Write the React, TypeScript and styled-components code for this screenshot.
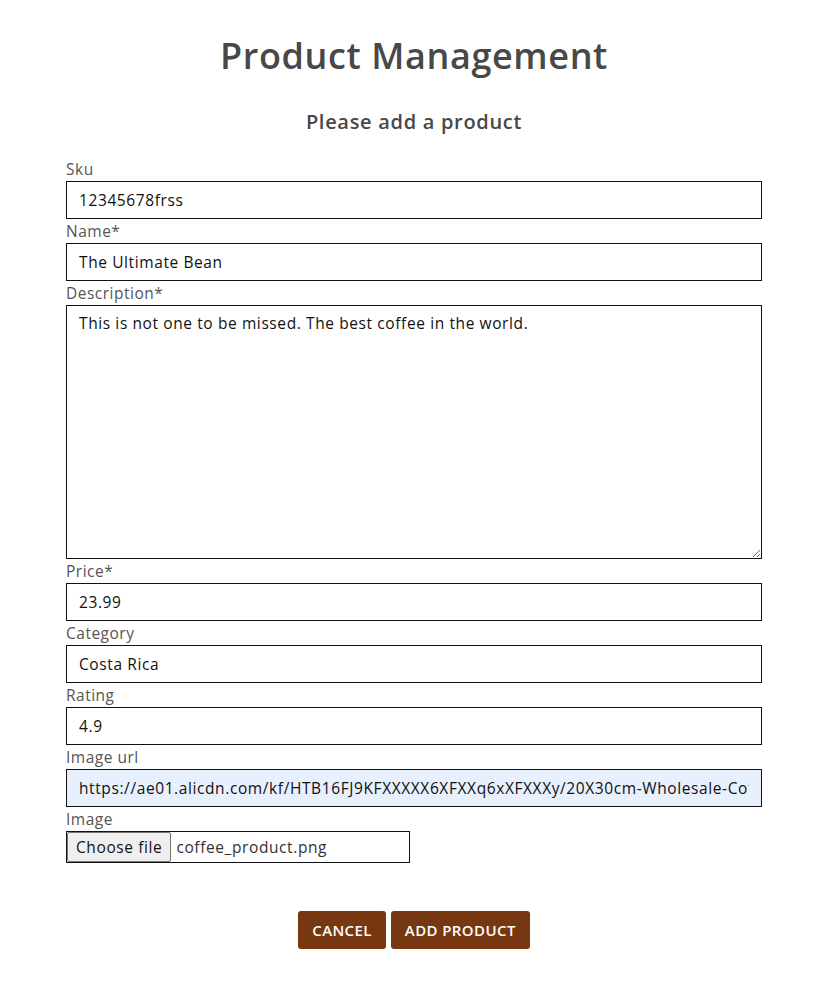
import React from "react";
import styled, { createGlobalStyle } from "styled-components";

const Global = createGlobalStyle`
  html, body { margin: 0; padding: 0; background: #fff; }
  body { font-family: "Open Sans", "Noto Sans", sans-serif; color: #444; }
  * { box-sizing: border-box; }
`;

const Page = styled.main`
  width: 100%;
  padding: 32px 65px 40px 66px;
  display: flex;
  flex-direction: column;
`;

const Title = styled.h1`
  margin: 0;
  text-align: center;
  font-size: 36px;
  letter-spacing: 0.6px;
  line-height: 48px;
  font-weight: 600;
  color: #484848;
`;

const Subtitle = styled.h2`
  margin: 27px 0 20px;
  text-align: center;
  font-size: 20px;
  letter-spacing: 0.7px;
  line-height: 30px;
  font-weight: 600;
  color: #484848;
`;

const Form = styled.form`
  display: flex;
  flex-direction: column;
`;

const Label = styled.label`
  display: block;
  font-size: 15.5px;
  letter-spacing: 0.5px;
  line-height: 24px;
  color: #555;
`;

const fieldText = `
  font-family: inherit;
  font-size: 15.5px;
  letter-spacing: 0.6px;
  color: #111;
  border: 1px solid #111;
  border-radius: 0;
  outline: none;
`;

const Input = styled.input<{ $autofill?: boolean }>`
  ${fieldText}
  display: block;
  width: 100%;
  height: 38px;
  padding: 0 12px;
  background: ${(p) => (p.$autofill ? "#e8f0fe" : "#fff")};
`;

const TextArea = styled.textarea`
  ${fieldText}
  display: block;
  width: 100%;
  height: 254px;
  padding: 5px 12px;
  line-height: 24px;
  resize: vertical;
`;

const FileBox = styled.div`
  display: flex;
  align-items: stretch;
  width: 344px;
  height: 32px;
  border: 1px solid #111;
`;

const FileButton = styled.span`
  display: flex;
  align-items: center;
  padding: 0 8px;
  background: #efefef;
  border: 1px solid #767676;
  border-radius: 2px;
  font-size: 15.5px;
  letter-spacing: 0.6px;
  color: #111;
`;

const FileName = styled.span`
  display: flex;
  align-items: center;
  padding-left: 5px;
  font-size: 15.5px;
  letter-spacing: 0.6px;
  color: #333;
`;

const Actions = styled.div`
  display: flex;
  justify-content: center;
  gap: 5px;
  margin-top: 48px;
`;

const Button = styled.button`
  height: 38px;
  padding: 0 14px;
  border: none;
  border-radius: 3px;
  background: #773710;
  color: #fff;
  font-family: inherit;
  font-size: 15px;
  letter-spacing: 0.4px;
  font-weight: 600;
  text-transform: uppercase;
  cursor: pointer;
`;

const fields = [
  { label: "Sku", value: "12345678frss" },
  { label: "Name*", value: "The Ultimate Bean" },
];

const fields2 = [
  { label: "Price*", value: "23.99" },
  { label: "Category", value: "Costa Rica" },
  { label: "Rating", value: "4.9" },
];

export default function App() {
  return (
    <>
      <Global />
      <Page>
        <Title>Product Management</Title>
        <Subtitle>Please add a product</Subtitle>
        <Form onSubmit={(e) => e.preventDefault()}>
          {fields.map((f) => (
            <div key={f.label}>
              <Label>{f.label}</Label>
              <Input defaultValue={f.value} />
            </div>
          ))}
          <div>
            <Label>Description*</Label>
            <TextArea defaultValue="This is not one to be missed. The best coffee in the world." />
          </div>
          {fields2.map((f) => (
            <div key={f.label}>
              <Label>{f.label}</Label>
              <Input defaultValue={f.value} />
            </div>
          ))}
          <div>
            <Label>Image url</Label>
            <Input
              $autofill
              defaultValue="https://ae01.alicdn.com/kf/HTB16FJ9KFXXXXX6XFXXq6xXFXXXy/20X30cm-Wholesale-Coffee.jpg"
            />
          </div>
          <div>
            <Label>Image</Label>
            <FileBox>
              <FileButton>Choose file</FileButton>
              <FileName>coffee_product.png</FileName>
            </FileBox>
          </div>
          <Actions>
            <Button type="button">Cancel</Button>
            <Button type="submit">Add Product</Button>
          </Actions>
        </Form>
      </Page>
    </>
  );
}
